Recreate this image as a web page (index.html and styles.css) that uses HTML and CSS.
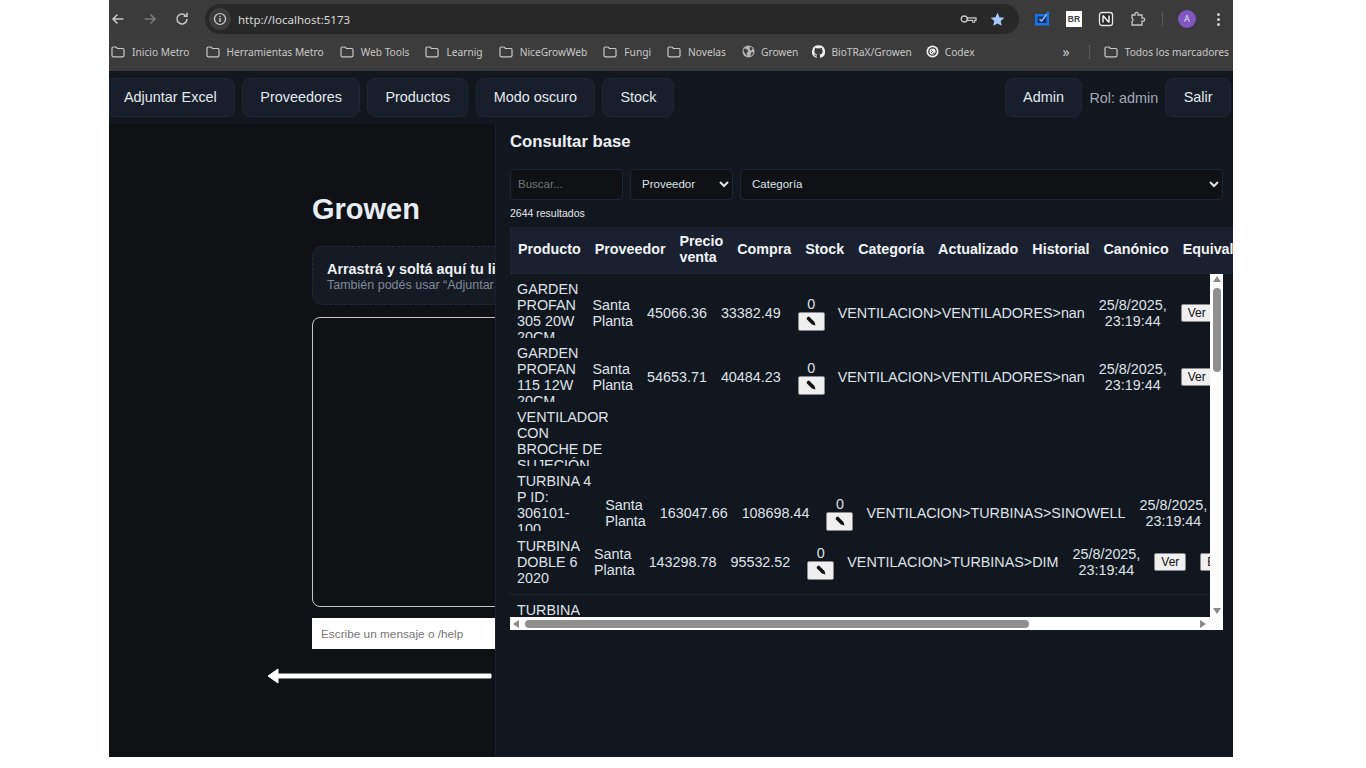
FILE: index.html
```html
<!DOCTYPE html>
<html lang="es">
<head>
    <meta charset="UTF-8">
    <meta name="viewport" content="width=device-width, initial-scale=1.0">
    <title>Growen</title>
    <link rel="stylesheet" href="styles.css">
</head>
<body>
    <svg class="icon-defs" aria-hidden="true">
        <symbol id="folder" viewBox="0 0 14 12">
            <path d="M1 2.2C1 1.5 1.5 1 2.2 1H5l1.4 1.5h5.4c.7 0 1.2.5 1.2 1.2v5.9c0 .7-.5 1.2-1.2 1.2H2.2C1.5 10.800 1 10.300 1 9.600Z" fill="none" stroke="currentColor" stroke-width="1.200"/>
        </symbol>
        <symbol id="pencil" viewBox="0 0 12 12">
            <path d="M2.500 2 4 1.500 9.500 7 10.500 10.500 7 9.500 1.500 4Z" fill="#111"/>
        </symbol>
    </svg>

    <div class="screen">
        <!-- barra del navegador -->
        <div class="toolbar">
            <svg class="nav-icon" viewBox="0 0 16 16"><path d="M13.500 8H3M7.500 3.500 3 8l4.500 4.500" fill="none" stroke="#c7c7c7" stroke-width="1.500"/></svg>
            <svg class="nav-icon" viewBox="0 0 16 16"><path d="M2.500 8H13M8.500 3.500 13 8l-4.500 4.500" fill="none" stroke="#7b7b7b" stroke-width="1.500"/></svg>
            <svg class="nav-icon" viewBox="0 0 16 16"><path d="M13 8a5 5 0 1 1-1.500-3.600M13 1.800v3.400H9.600" fill="none" stroke="#c7c7c7" stroke-width="1.500"/></svg>
            <div class="address">
                <span class="site-info">
                    <svg viewBox="0 0 14 14" width="14" height="14"><circle cx="7" cy="7" r="5.500" fill="none" stroke="#d6d6d6" stroke-width="1.200"/><path d="M7 6v4M7 3.800v1.200" stroke="#d6d6d6" stroke-width="1.300"/></svg>
                </span>
                <span class="url">http://localhost:5173</span>
                <svg class="key-icon" viewBox="0 0 18 10" width="17" height="10"><circle cx="4.500" cy="5" r="3.200" fill="none" stroke="#c7c7c7" stroke-width="1.400"/><path d="M8 3.800h9v2.600h-1.500v2h-2v-2H8Z" fill="none" stroke="#c7c7c7" stroke-width="1.200"/></svg>
                <svg class="star-icon" viewBox="0 0 16 16" width="15" height="15"><path d="M8 .8l2.200 4.700 5.100.6-3.800 3.500 1 5.100L8 12.200l-4.500 2.500 1-5.100L.7 6.100l5.100-.6Z" fill="#a8c7fa"/></svg>
            </div>
            <div class="extensions">
                <svg class="ext" viewBox="0 0 16 16" width="16" height="16"><path d="M1 3h10.500v1.500h2V3H15v11.500H1Z" fill="#1a73e8"/><path d="M3.500 5.500h9v6.500h-9Z" fill="#12345f"/><path d="M5.500 8l2 2 5.500-7" fill="none" stroke="#8ab4f8" stroke-width="1.500"/><circle cx="14" cy="2" r="1.500" fill="#1a73e8"/></svg>
                <span class="ext ext-br">BR</span>
                <svg class="ext" viewBox="0 0 16 16" width="16" height="16"><rect x="1.500" y="1.500" width="13" height="13" rx="2.500" fill="#2b2b2b" stroke="#e6e6e6" stroke-width="1.300"/><path d="M5 4.500v7M5 4.500l6 7M11 4.500v7" fill="none" stroke="#f2f2f2" stroke-width="1.500"/></svg>
                <svg class="ext" viewBox="0 0 16 16" width="16" height="16"><path d="M2 4h3V2.800a1.500 1.500 0 0 1 3 0V4h4v3.200h1.200a1.500 1.500 0 0 1 0 3H12V14H2v-3.500a2 2 0 0 0 0-3.500Z" fill="none" stroke="#c7c7c7" stroke-width="1.300"/></svg>
                <span class="tool-sep"></span>
                <span class="avatar">A</span>
                <span class="dots"><i></i><i></i><i></i></span>
            </div>
        </div>

        <div class="bookmarks">
            <a class="mark"><svg class="mark-icon"><use href="#folder"/></svg>Inicio Metro</a>
            <a class="mark"><svg class="mark-icon"><use href="#folder"/></svg>Herramientas Metro</a>
            <a class="mark"><svg class="mark-icon"><use href="#folder"/></svg>Web Tools</a>
            <a class="mark"><svg class="mark-icon"><use href="#folder"/></svg>Learnig</a>
            <a class="mark"><svg class="mark-icon"><use href="#folder"/></svg>NiceGrowWeb</a>
            <a class="mark"><svg class="mark-icon"><use href="#folder"/></svg>Fungi</a>
            <a class="mark"><svg class="mark-icon"><use href="#folder"/></svg>Novelas</a>
            <a class="mark mark-tight">
                <svg class="round-icon" viewBox="0 0 14 14"><circle cx="7" cy="7" r="6.500" fill="#b5b5b5"/><path d="M3 3.500 6 5l.5 2L5 9l1 3L3 9 1.500 6ZM8.500 1.500l3 2-1 2.500-2-.5Z M10 8l2.500-.5L11 11l-2 .5Z" fill="#3c3c3c"/></svg>
                Growen
            </a>
            <a class="mark mark-tight">
                <svg class="round-icon" viewBox="0 0 16 16"><path fill="#f0f0f0" d="M8 .2a8 8 0 0 0-2.500 15.600c.4.100.5-.2.500-.4v-1.400c-2.200.5-2.700-1-2.700-1-.4-.9-.9-1.200-.9-1.200-.7-.5.100-.5.100-.5.800.100 1.200.8 1.200.8.700 1.200 1.900.9 2.300.7.100-.5.300-.9.500-1.100-1.800-.2-3.600-.9-3.600-4 0-.9.300-1.600.8-2.100-.1-.2-.4-1 .1-2.100 0 0 .7-.2 2.200.8a7.600 7.600 0 0 1 4 0c1.500-1 2.200-.8 2.200-.8.400 1.100.2 1.900.1 2.100.5.500.8 1.200.8 2.100 0 3.100-1.900 3.800-3.700 4 .3.300.6.800.6 1.500v2.200c0 .2.100.5.600.4A8 8 0 0 0 8 .2Z"/></svg>
                BioTRaX/Growen
            </a>
            <a class="mark mark-tight">
                <svg class="round-icon" viewBox="0 0 14 14"><circle cx="7" cy="7" r="6.500" fill="#f0f0f0"/><circle cx="7" cy="7" r="4" fill="none" stroke="#333" stroke-width="1.300"/><path d="M5.500 5.500 7 7.200 5.500 8.500M7.500 9h2" fill="none" stroke="#333" stroke-width="1"/></svg>
                Codex
            </a>
            <span class="mark-more">»</span>
            <span class="mark-sep"></span>
            <a class="mark mark-last"><svg class="mark-icon"><use href="#folder"/></svg>Todos los marcadores</a>
        </div>

        <!-- aplicacion -->
        <header class="app-bar">
            <nav class="app-nav">
                <button class="nav-btn">Adjuntar Excel</button>
                <button class="nav-btn">Proveedores</button>
                <button class="nav-btn">Productos</button>
                <button class="nav-btn">Modo oscuro</button>
                <button class="nav-btn">Stock</button>
            </nav>
            <div class="app-user">
                <button class="nav-btn">Admin</button>
                <span class="role">Rol: admin</span>
                <button class="nav-btn">Salir</button>
            </div>
        </header>

        <main class="workspace">
            <section class="chat">
                <h1>Growen</h1>
                <div class="dropzone">
                    <strong>Arrastrá y soltá aquí tu lista de precios</strong>
                    <span>También podés usar “Adjuntar Excel” en la barra superior</span>
                </div>
                <div class="chat-log"></div>
                <input class="chat-input" type="text" placeholder="Escribe un mensaje o /help">
            </section>

            <svg class="arrow" viewBox="0 0 226 20" width="226" height="20"><path d="M225 8v4H12v5L2 10 12 3v5Z" fill="#fff" stroke="#fff" stroke-width="1" stroke-linejoin="round"/></svg>

            <aside class="drawer">
                <h2>Consultar base</h2>
                <div class="filters">
                    <input class="field field-search" type="text" placeholder="Buscar...">
                    <select class="field field-supplier"><option>Proveedor</option></select>
                    <select class="field field-category"><option>Categoría</option></select>
                </div>
                <p class="count">2644 resultados</p>

                <div class="table-head">
                    <span>Producto</span>
                    <span>Proveedor</span>
                    <span>Precio<br>venta</span>
                    <span>Compra</span>
                    <span>Stock</span>
                    <span>Categoría</span>
                    <span>Actualizado</span>
                    <span>Historial</span>
                    <span>Canónico</span>
                    <span>Equivalencias</span>
                </div>

                <div class="table-body">
                    <div class="row">
                        <div class="row-inner">
                            <div>GARDEN<br>PROFAN<br>305 20W<br>20CM</div>
                            <div>Santa<br>Planta</div>
                            <div>45066.36</div>
                            <div>33382.49</div>
                            <div class="stock">0<button class="edit-btn"><svg width="12" height="12"><use href="#pencil"/></svg></button></div>
                            <div>VENTILACION&gt;VENTILADORES&gt;nan</div>
                            <div class="date">25/8/2025,<br>23:19:44</div>
                            <button class="small-btn">Ver</button>
                            <button class="small-btn">Editar</button>
                        </div>
                    </div>
                    <div class="row">
                        <div class="row-inner">
                            <div>GARDEN<br>PROFAN<br>115 12W<br>20CM</div>
                            <div>Santa<br>Planta</div>
                            <div>54653.71</div>
                            <div>40484.23</div>
                            <div class="stock">0<button class="edit-btn"><svg width="12" height="12"><use href="#pencil"/></svg></button></div>
                            <div>VENTILACION&gt;VENTILADORES&gt;nan</div>
                            <div class="date">25/8/2025,<br>23:19:44</div>
                            <button class="small-btn">Ver</button>
                            <button class="small-btn">Editar</button>
                        </div>
                    </div>
                    <div class="row">
                        <div class="row-inner">
                            <div>VENTILADOR<br>CON<br>BROCHE DE<br>SUJECIÓN</div>
                        </div>
                    </div>
                    <div class="row row-wide">
                        <div class="row-inner">
                            <div>TURBINA 4<br>P ID:<br>306101-<br>100<br>CFM</div>
                            <div>Santa<br>Planta</div>
                            <div>163047.66</div>
                            <div>108698.44</div>
                            <div class="stock">0<button class="edit-btn"><svg width="12" height="12"><use href="#pencil"/></svg></button></div>
                            <div>VENTILACION&gt;TURBINAS&gt;SINOWELL</div>
                            <div class="date">25/8/2025,<br>23:19:44</div>
                            <button class="small-btn">Ver</button>
                            <button class="small-btn">Editar</button>
                        </div>
                    </div>
                    <div class="row row-ruled">
                        <div class="row-inner">
                            <div>TURBINA<br>DOBLE 6<br>2020</div>
                            <div>Santa<br>Planta</div>
                            <div>143298.78</div>
                            <div>95532.52</div>
                            <div class="stock">0<button class="edit-btn"><svg width="12" height="12"><use href="#pencil"/></svg></button></div>
                            <div>VENTILACION&gt;TURBINAS&gt;DIM</div>
                            <div class="date">25/8/2025,<br>23:19:44</div>
                            <button class="small-btn">Ver</button>
                            <button class="small-btn">Editar</button>
                        </div>
                    </div>
                    <div class="row">
                        <div class="row-inner">
                            <div>TURBINA<br>DOBLE 8</div>
                        </div>
                    </div>

                    <!-- barras de scroll -->
                    <div class="scroll-y">
                        <i class="tri tri-up"></i>
                        <b class="thumb-y"></b>
                        <i class="tri tri-down"></i>
                    </div>
                    <div class="scroll-x">
                        <i class="tri tri-left"></i>
                        <b class="thumb-x"></b>
                        <i class="tri tri-right"></i>
                    </div>
                </div>
            </aside>
        </main>
    </div>
</body>
</html>
```

FILE: styles.css
```css
body {
    margin: 0;
    background-color: #ffffff;
    font-family: "Liberation Sans", Arial, sans-serif;
}
button {
    font-family: inherit;
}
.icon-defs {
    display: none;
}
.screen {
    position: relative;
    width: 1124px;
    height: 757px;
    margin-left: 109px;
    overflow: hidden;
    display: flex;
    flex-direction: column;
    background-color: #0f1115;
}

/* navegador */
.toolbar {
    height: 38px;
    flex-shrink: 0;
    display: flex;
    align-items: center;
    padding: 0 6px 0 1px;
    box-sizing: border-box;
    background-color: #3b3b3b;
}
.nav-icon {
    width: 16px;
    height: 16px;
    margin-right: 16px;
}
.address {
    width: 814px;
    height: 30px;
    margin-left: -1px;
    border-radius: 15px;
    background-color: #282828;
    display: flex;
    align-items: center;
    box-sizing: border-box;
    padding: 0 14px 0 4px;
}
.site-info {
    width: 22px;
    height: 22px;
    border-radius: 50%;
    background-color: #3c3c3c;
    display: flex;
    align-items: center;
    justify-content: center;
}
.url {
    margin-left: 7px;
    flex: 1;
    color: #d8d8d8;
    font-family: "Noto Sans", sans-serif;
    font-size: 11.500px;
}
.key-icon {
    margin-right: 13px;
}
.extensions {
    flex: 1;
    display: flex;
    align-items: center;
    padding-left: 15px;
}
.ext {
    margin-right: 16px;
}
.ext-br {
    width: 16px;
    height: 16px;
    background-color: #ffffff;
    color: #444;
    font-size: 8.500px;
    font-weight: bold;
    line-height: 16px;
    text-align: center;
}
.tool-sep {
    width: 1px;
    height: 14px;
    margin: 0 15px 0 0;
    background-color: #5a5a5a;
}
.avatar {
    width: 18px;
    height: 18px;
    border-radius: 50%;
    background-color: #7e57c2;
    color: #e8e0f8;
    font-family: "Noto Sans", sans-serif;
    font-size: 9px;
    line-height: 18px;
    text-align: center;
}
.dots {
    margin-left: 21px;
    display: flex;
    flex-direction: column;
    gap: 2px;
}
.dots i {
    width: 3px;
    height: 3px;
    border-radius: 50%;
    background-color: #d0d0d0;
}
.bookmarks {
    height: 33px;
    flex-shrink: 0;
    display: flex;
    align-items: center;
    padding: 0 0 6px 2px;
    box-sizing: border-box;
    background-color: #3c3c3c;
    color: #c9c9c9;
    font-family: "Noto Sans", sans-serif;
    font-size: 10.200px;
}
.mark {
    display: flex;
    align-items: center;
    margin-right: 16px;
    white-space: nowrap;
}
.mark-tight {
    margin-right: 14px;
}
.mark-icon {
    flex-shrink: 0;
    width: 14px;
    height: 12px;
    margin-right: 7px;
    color: #c9c9c9;
}
.round-icon {
    flex-shrink: 0;
    width: 13px;
    height: 13px;
    margin-right: 6px;
}
.mark-more {
    margin-left: 74px;
    font-size: 14px;
    line-height: 14px;
}
.mark-sep {
    width: 1px;
    height: 14px;
    margin: 0 14px 0 19px;
    background-color: #5a5a5a;
}
.mark-last {
    margin-right: 0;
}

/* barra de la app */
.app-bar {
    height: 53px;
    flex-shrink: 0;
    display: flex;
    align-items: center;
    justify-content: space-between;
    padding-right: 2px;
    box-sizing: border-box;
    background-color: #12161f;
}
.app-nav,
.app-user {
    display: flex;
    align-items: center;
    gap: 7.500px;
}
.app-user {
    gap: 7px;
}
.app-nav {
    margin-left: -3px;
}
.nav-btn {
    height: 39px;
    padding: 0 17px 1px;
    border: 1px solid #1f2636;
    border-radius: 8px;
    background-color: #181e2c;
    color: #e6e9ef;
    font-size: 14.400px;
}
.app-user .nav-btn {
    padding: 0 17.500px 1px;
}
.role {
    color: #a3a9b4;
    font-size: 14.400px;
}

/* area de chat */
.workspace {
    position: relative;
    flex: 1;
    min-height: 0;
    overflow: hidden;
}
.chat {
    width: 900px;
    margin-left: 203px;
}
.chat h1 {
    margin: 0;
    padding-top: 68px;
    color: #e8ecf3;
    font-size: 29px;
    line-height: 34px;
}
.dropzone {
    display: flex;
    flex-direction: column;
    height: 59px;
    margin-top: 20px;
    padding: 14px;
    box-sizing: border-box;
    border: 1px dashed #232a3b;
    border-radius: 10px;
    background-color: #161a24;
}
.dropzone strong {
    color: #eef0f4;
    font-size: 14.400px;
    line-height: 16px;
}
.dropzone span {
    color: #7f8a9c;
    font-size: 12.500px;
    line-height: 16px;
}
.chat-log {
    height: 290px;
    margin-top: 12px;
    box-sizing: border-box;
    border: 1px solid #c4c4c4;
    border-radius: 8px;
}
.chat-input {
    display: block;
    width: 100%;
    height: 31px;
    margin-top: 11px;
    padding: 0 9px;
    box-sizing: border-box;
    border: none;
    background-color: #ffffff;
    font-family: inherit;
    font-size: 11.800px;
}
.arrow {
    position: absolute;
    left: 157px;
    top: 542px;
}

/* panel derecho */
.drawer {
    position: absolute;
    top: 0;
    right: 0;
    bottom: 0;
    width: 738px;
    box-sizing: border-box;
    padding: 0 0 0 14px;
    overflow: hidden;
    border-left: 1px solid #1a2030;
    background-color: #12161f;
    color: #e5e7eb;
}
.drawer h2 {
    margin: 0;
    padding-top: 8px;
    color: #eef0f4;
    font-size: 16.700px;
    line-height: 20px;
}
.filters {
    display: flex;
    gap: 7px;
    width: 713px;
    margin-top: 17px;
}
.field {
    height: 31px;
    box-sizing: border-box;
    padding: 0 7px 1px;
    border: 1px solid #1e2535;
    border-radius: 4px;
    background-color: #0f1115;
    color: #dfe2e8;
    color-scheme: dark;
    font-family: inherit;
    font-size: 11.500px;
}
.field-search {
    width: 113px;
}
.field-supplier {
    width: 103px;
}
.field-category {
    flex: 1;
}
.count {
    margin: 7px 0 0;
    font-size: 10.500px;
    line-height: 12px;
}
.table-head {
    display: flex;
    align-items: center;
    gap: 14px;
    width: max-content;
    min-width: 723px;
    height: 47px;
    margin-top: 8px;
    padding: 0 0 2px 8px;
    box-sizing: border-box;
    border-bottom: 1px solid #1e2535;
    background-color: #1a2030;
    color: #f1f3f6;
    font-size: 14.300px;
    font-weight: bold;
    line-height: 16px;
    white-space: nowrap;
}
.table-body {
    position: relative;
    width: 713px;
    height: 356px;
    overflow: hidden;
    color: #dfe2e8;
    font-size: 14.350px;
    line-height: 16px;
}
.row {
    height: 64px;
    box-sizing: border-box;
    overflow: hidden;
}
.row-wide {
    height: 65px;
}
.row-ruled {
    border-bottom: 1px solid #1e2535;
}
.row-inner {
    display: flex;
    align-items: center;
    gap: 14px;
    width: max-content;
    padding: 7px;
    white-space: nowrap;
}
.stock {
    display: flex;
    flex-direction: column;
    align-items: center;
    margin: 0 -1px 0 3px;
}
.date {
    text-align: center;
}
.edit-btn {
    display: flex;
    align-items: center;
    justify-content: center;
    width: 27px;
    height: 19px;
    padding: 0;
    border: 1px solid #8a8a8a;
    border-radius: 2px;
    background-color: #efefef;
}
.small-btn {
    height: 18px;
    padding: 0 6px;
    border: 1px solid #8a8a8a;
    border-radius: 2px;
    background-color: #efefef;
    color: #111;
    font-size: 12px;
}

/* scrollbars dibujadas */
.scroll-y {
    position: absolute;
    top: 0;
    right: 0;
    bottom: 13px;
    width: 13px;
    display: flex;
    flex-direction: column;
    align-items: center;
    background-color: #ffffff;
}
.scroll-x {
    position: absolute;
    left: 0;
    right: 0;
    bottom: 0;
    height: 13px;
    display: flex;
    align-items: center;
    background-color: #ffffff;
}
.thumb-y {
    width: 8px;
    height: 84px;
    margin-top: 6px;
    border-radius: 4px;
    background-color: #8f8f8f;
}
.thumb-x {
    width: 504px;
    height: 8px;
    margin-left: 6px;
    border-radius: 4px;
    background-color: #8f8f8f;
}
.tri {
    width: 0;
    height: 0;
    border: 4px solid transparent;
}
.tri-up {
    margin-top: 2px;
    border-top-width: 0;
    border-bottom: 6px solid #8a8a8a;
}
.tri-down {
    margin-top: auto;
    margin-bottom: 3px;
    border-bottom-width: 0;
    border-top: 6px solid #8a8a8a;
}
.tri-left {
    margin-left: 3px;
    border-left-width: 0;
    border-right: 6px solid #8a8a8a;
}
.tri-right {
    margin-left: auto;
    margin-right: 17px;
    border-right-width: 0;
    border-left: 6px solid #8a8a8a;
}
```
